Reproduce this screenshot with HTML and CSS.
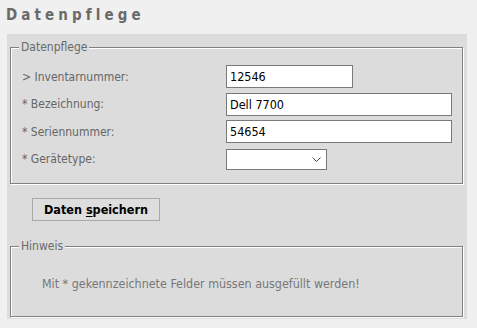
FILE: index.html
```html
<!DOCTYPE html>
<html lang="de">
<head>
<meta charset="utf-8">
<title>Datenpflege</title>
<link rel="stylesheet" href="styles.css">
</head>
<body>
<h1 class="page-title">Datenpflege</h1>
<div class="panel">
  <fieldset class="box box-form">
    <legend class="box-legend">Datenpflege</legend>
    <div class="form-grid">
      <label class="lbl">&gt; Inventarnummer:</label>
      <div class="field"><span class="input input-short">12546</span></div>
      <label class="lbl">* Bezeichnung:</label>
      <div class="field"><span class="input input-long">Dell 7700</span></div>
      <label class="lbl">* Seriennummer:</label>
      <div class="field"><span class="input input-long">54654</span></div>
      <label class="lbl">* Gerätetype:</label>
      <div class="field"><span class="select"><svg class="chev" width="9" height="5" viewBox="0 0 9 5"><path d="M0.5 0.5 L4.5 4.5 L8.5 0.5" fill="none" stroke="#444" stroke-width="1"/></svg></span></div>
    </div>
  </fieldset>
  <div class="actions">
    <button class="btn" type="button">Daten <u>s</u>peichern</button>
  </div>
  <fieldset class="box box-hint">
    <legend class="box-legend">Hinweis</legend>
    <p class="hint">Mit * gekennzeichnete Felder müssen ausgefüllt werden!</p>
  </fieldset>
</div>
</body>
</html>
```
FILE: styles.css
```css
html, body {
  margin: 0;
  padding: 0;
  background: #f0f0f0;
}
body {
  font-family: "DejaVu Sans Condensed", "DejaVu Sans", sans-serif;
  font-size: 12px;
  color: #666;
}
.page-title {
  margin: 0;
  padding: 6px 0 0 6px;
  height: 34px;
  box-sizing: border-box;
  font-size: 15px;
  font-weight: bold;
  letter-spacing: 4.1px;
  color: #6a6a6a;
  line-height: 18px;
}
.panel {
  margin-left: 7px;
  width: 460px;
  height: 285px;
  background: #dcdcdc;
  padding-top: 7px;
  box-sizing: border-box;
}
.box {
  margin: 0 4px 0 3px;
  border: 1px solid #808080;
  box-shadow: inset 1px 1px 0 #fff, 1px 1px 0 #fff;
  padding: 0;
  min-width: 0;
}
.box-legend {
  padding: 0 2px;
  margin-left: 8px;
  color: #6a6a6a;
  line-height: 13px;
  background: #dcdcdc;
}
.box-form {
  padding: 11px 0 12px 0;
}
.form-grid {
  display: grid;
  grid-template-columns: 204px 1fr;
  grid-auto-rows: 23px;
  row-gap: 4.5px;
  align-items: center;
  margin-left: 11px;
}
.lbl {
  line-height: 14px;
}
.field {
  display: flex;
  align-items: center;
}
.input {
  display: block;
  box-sizing: border-box;
  height: 23px;
  border: 1px solid #7a7a7a;
  background: #fff;
  color: #000;
  padding: 0 3px;
  line-height: 21px;
  font-size: 12.5px;
}
.input-short { width: 127px; }
.input-long { width: 226px; }
.select {
  display: flex;
  align-items: center;
  justify-content: flex-end;
  box-sizing: border-box;
  width: 101px;
  height: 21px;
  border: 1px solid #7a7a7a;
  background: #fff;
  padding-right: 5px;
}
.actions {
  padding: 14px 0 0 25px;
  height: 56px;
  box-sizing: border-box;
}
.btn {
  display: block;
  width: 128px;
  height: 23px;
  border: 1px solid #a8a8a8;
  background: #dedede;
  font-family: inherit;
  font-size: 12.5px;
  font-weight: bold;
  color: #000;
  padding: 0;
}
.btn u {
  text-underline-offset: 2px;
}
.box-hint {
  height: 77px;
  box-sizing: border-box;
  padding: 0;
}
.hint {
  margin: 24px 0 0 31px;
  color: #777;
  line-height: 14px;
  font-size: 12.4px;
}
```
